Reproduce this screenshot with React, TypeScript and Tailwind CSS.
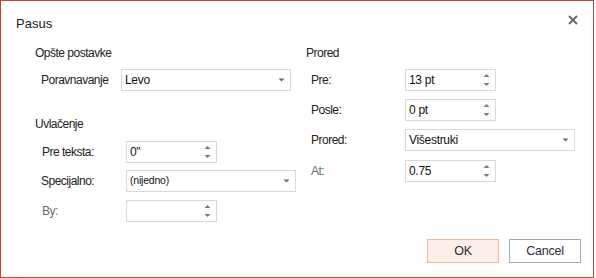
import React from "react";

const font = { fontFamily: '"Liberation Sans", Arial, sans-serif' };

function Arrow() {
  return (
    <svg width="7" height="4" viewBox="0 0 7 4" className="shrink-0">
      <polygon points="0.5,0.5 6.5,0.5 3.5,3.5" fill="#6b6b6b" />
    </svg>
  );
}

function SpinArrows() {
  return (
    <svg width="7" height="14" viewBox="0 0 7 14" className="shrink-0">
      <polygon points="0.5,4 6.5,4 3.5,1" fill="#7a7a7a" />
      <polygon points="0.5,10 6.5,10 3.5,13" fill="#7a7a7a" />
    </svg>
  );
}

function Select({ value, width, small }: { value: string; width: string; small?: boolean }) {
  return (
    <div className={`${width} h-[22px] border border-[#d9d9d9] bg-white flex items-center justify-between pl-[3px] pr-[5px]`}>
      <span className={small ? "text-[10.5px] text-[#111] tracking-[-0.2px]" : "text-[12px] text-[#111] tracking-[-0.3px]"}>
        {value}
      </span>
      <Arrow />
    </div>
  );
}

function Spinner({ value }: { value: string }) {
  return (
    <div className="w-[91px] h-[22px] border border-[#d9d9d9] bg-white flex items-center justify-between pl-[3px] pr-[5px]">
      <span className="text-[12px] text-[#111] tracking-[-0.3px]">{value}</span>
      <SpinArrows />
    </div>
  );
}

function Row({ label, labelW, indent, muted, children, mt }: {
  label: string;
  labelW: string;
  indent: string;
  muted?: boolean;
  children: React.ReactNode;
  mt: string;
}) {
  return (
    <div className={`flex items-center ${mt}`}>
      <div className={`shrink-0 ${indent} ${labelW} text-[12px] tracking-[-0.5px] ${muted ? "text-[#6a6a6a]" : "text-[#222]"}`}>
        {label}
      </div>
      {children}
    </div>
  );
}

export default function App() {
  return (
    <div className="bg-white w-[596px] h-[278px]" style={font}>
      <div className="w-[594px] h-[278px] border border-[#c1462b] bg-white flex flex-col">
        {/* title bar */}
        <div className="flex justify-between items-start h-[38px]">
          <div className="pl-[15px] pt-[14px] text-[13px] leading-[18px] text-[#1a1a1a]">Pasus</div>
          <svg width="10" height="10" viewBox="0 0 10 10" className="mt-[14px] mr-[15px]">
            <path d="M1 1 L9 9 M9 1 L1 9" stroke="#6b6b6b" strokeWidth="2" />
          </svg>
        </div>

        <div className="flex">
          {/* left column */}
          <div className="w-[305px] shrink-0 pl-[34px] flex flex-col">
            <div className="mt-[6px] text-[12px] leading-[16px] tracking-[-0.5px] text-[#222]">Opšte postavke</div>
            <Row label="Poravnavanje" indent="pl-[6px]" labelW="w-[86px]" mt="mt-[8px]">
              <Select value="Levo" width="w-[170px]" />
            </Row>
            <div className="mt-[25px] text-[12px] leading-[16px] tracking-[-0.5px] text-[#222]">Uvlačenje</div>
            <Row label="Pre teksta:" indent="pl-[7px]" labelW="w-[91px]" mt="mt-[9px]">
              <Spinner value={'0"'} />
            </Row>
            <Row label="Specijalno:" indent="pl-[6px]" labelW="w-[91px]" mt="mt-[7px]">
              <Select value="(nijedno)" width="w-[170px]" small />
            </Row>
            <Row label="By:" indent="pl-[7px]" labelW="w-[91px]" mt="mt-[8px]" muted>
              <Spinner value="" />
            </Row>
          </div>

          {/* right column */}
          <div className="flex flex-col">
            <div className="mt-[6px] text-[12px] leading-[16px] tracking-[-0.5px] text-[#222]">Prored</div>
            <Row label="Pre:" indent="pl-[5px]" labelW="w-[99px]" mt="mt-[8px]">
              <Spinner value="13 pt" />
            </Row>
            <Row label="Posle:" indent="pl-[5px]" labelW="w-[99px]" mt="mt-[8px]">
              <Spinner value="0 pt" />
            </Row>
            <Row label="Prored:" indent="pl-[5px]" labelW="w-[99px]" mt="mt-[8px]">
              <Select value="Višestruki" width="w-[170px]" />
            </Row>
            <Row label="At:" indent="pl-[5px]" labelW="w-[99px]" mt="mt-[9px]" muted>
              <Spinner value="0.75" />
            </Row>
          </div>
        </div>

        {/* footer */}
        <div className="mt-auto flex justify-end gap-[10px] pr-[12px] pb-[14px]">
          <button className="w-[72px] h-[24px] border border-[#f4b59b] bg-[#fcefe9] text-[12.5px] tracking-[-0.2px] text-[#2b2b3a]">
            OK
          </button>
          <button className="w-[72px] h-[24px] border border-[#ababab] bg-white text-[12.5px] tracking-[-0.2px] text-[#2b2b3a]">
            Cancel
          </button>
        </div>
      </div>
    </div>
  );
}
